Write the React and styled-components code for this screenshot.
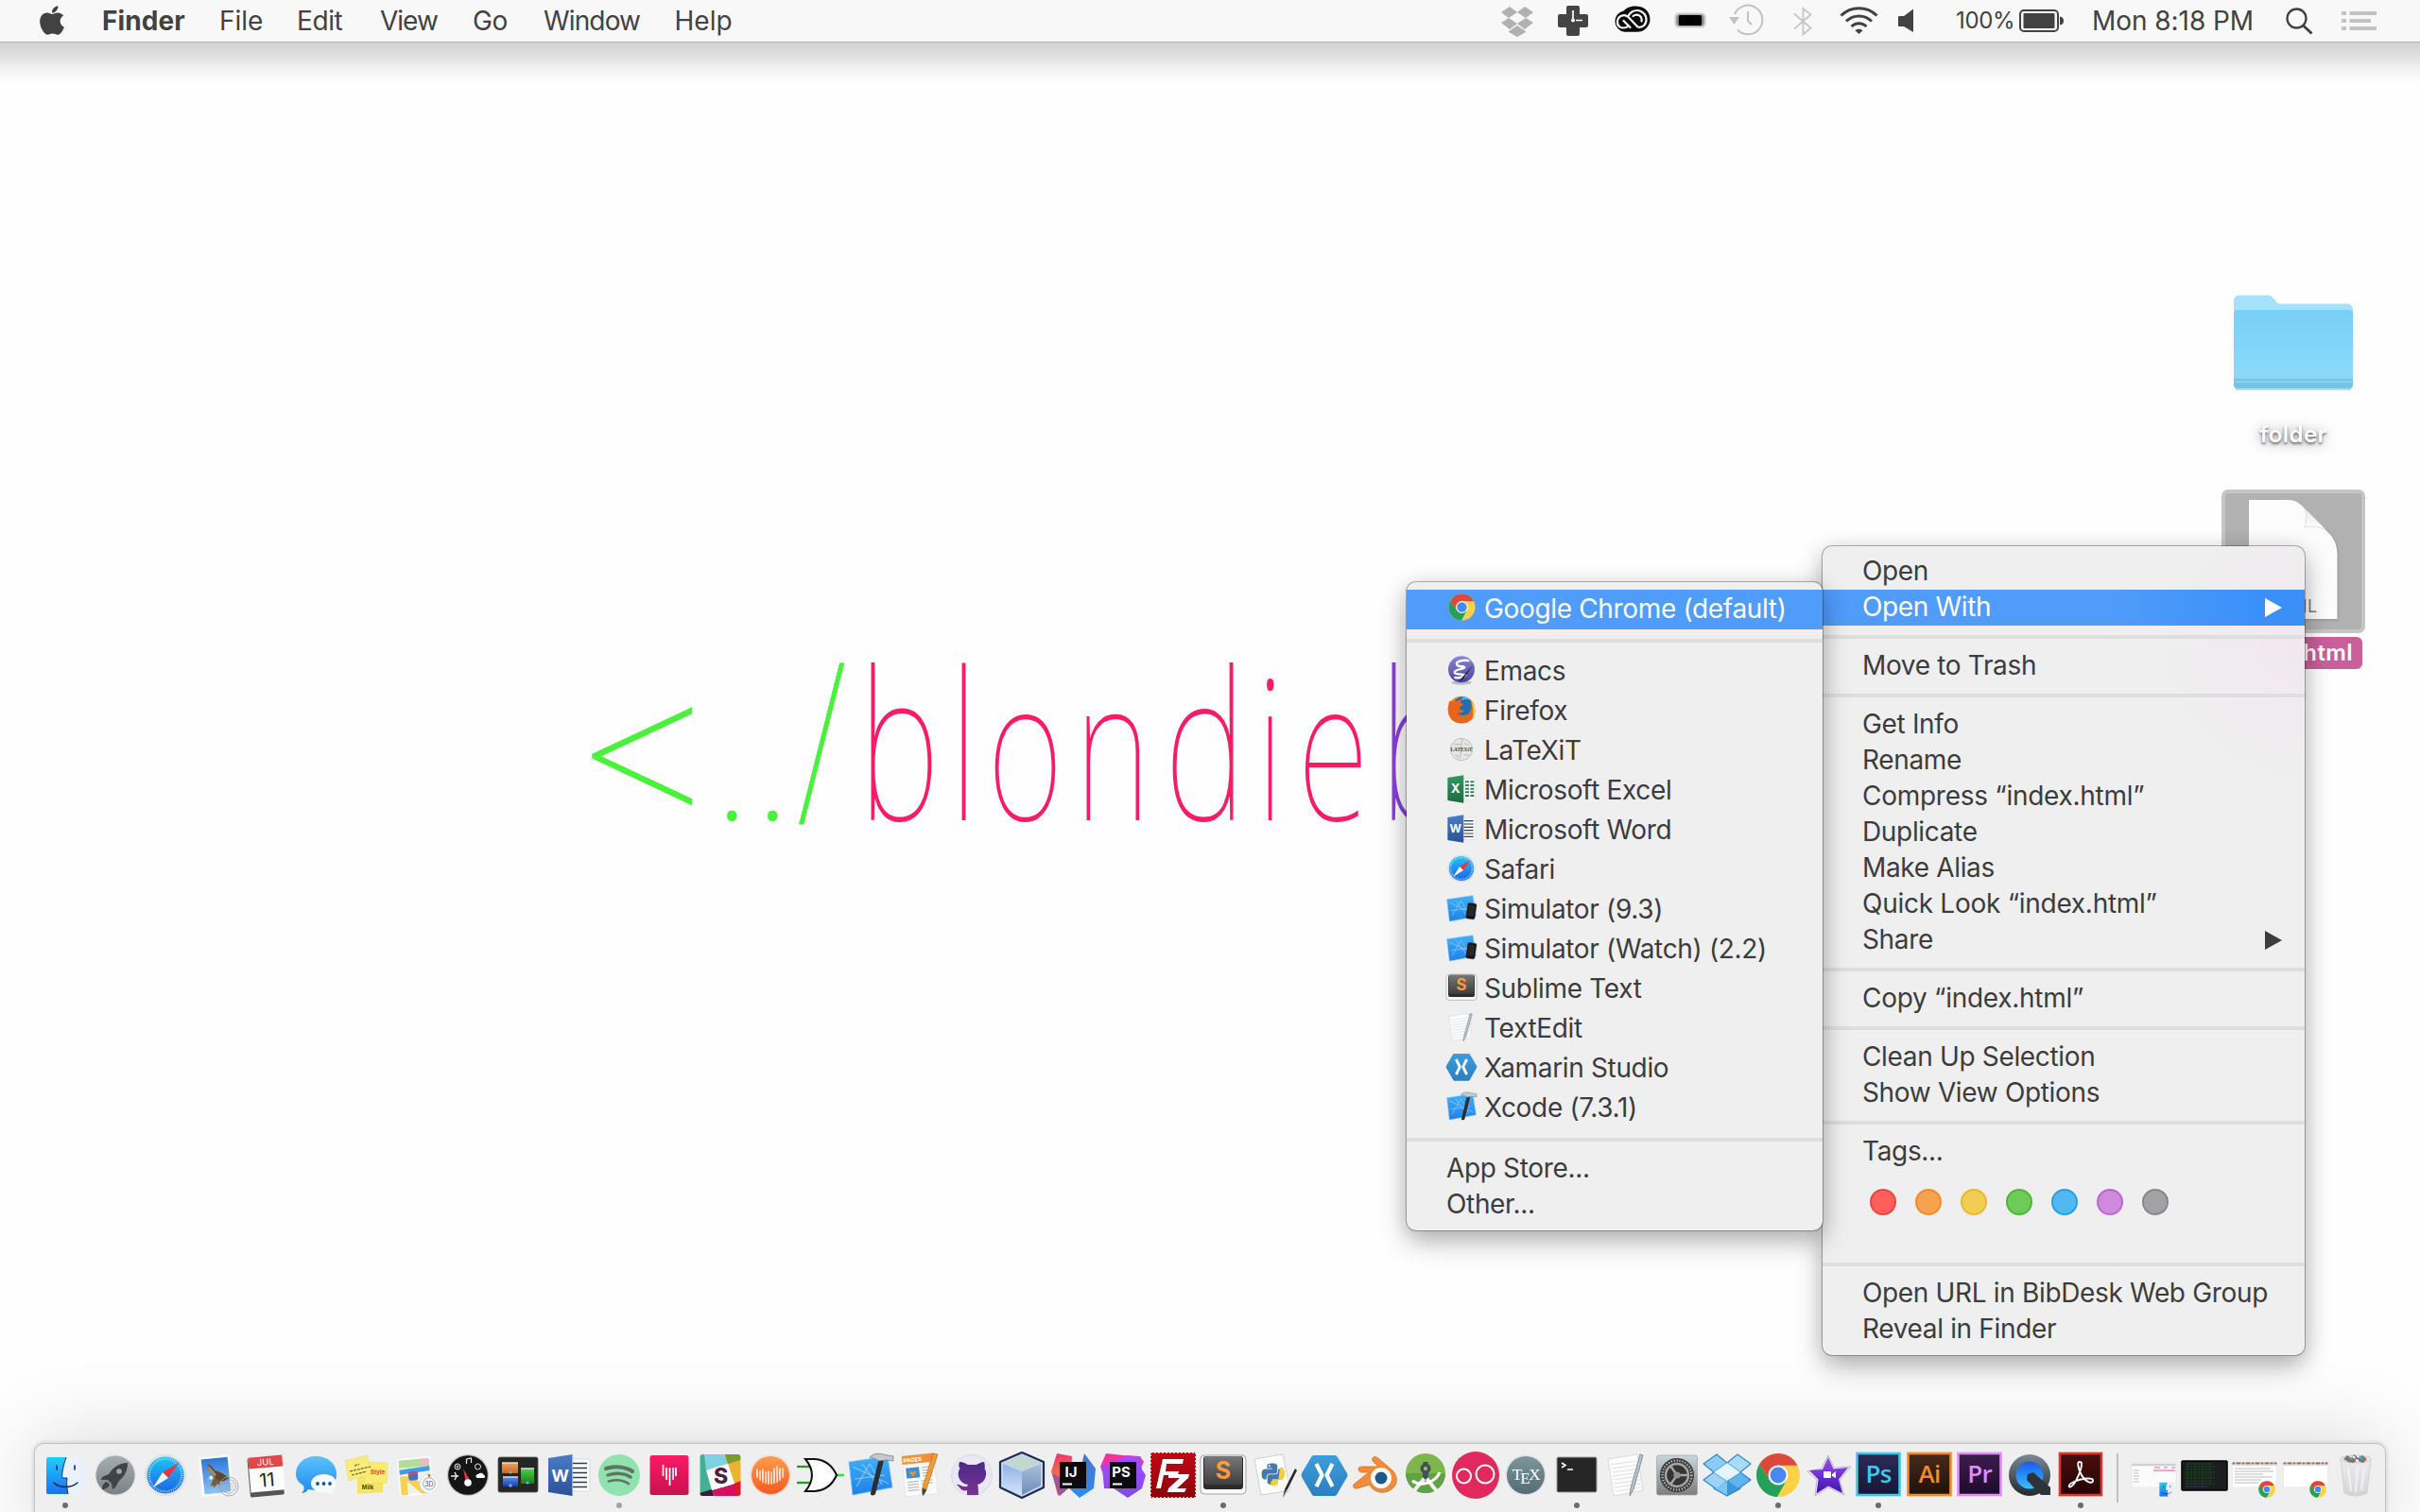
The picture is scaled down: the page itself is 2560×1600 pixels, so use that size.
import React from 'react';
import styled, { createGlobalStyle, css } from 'styled-components';
import { FaApple, FaPython } from 'react-icons/fa';

const GlobalStyle = createGlobalStyle`
  * { box-sizing: border-box; }
  body { margin: 0; background: #fefefe; font-family: Inter, Roboto, sans-serif; }
`;

const Screen = styled.div`
  position: relative;
  display: flex;
  flex-direction: column;
  width: 2560px;
  height: 1600px;
  overflow: hidden;
  background: #fefefe;
`;

/* ---------- menu bar ---------- */

const MenuBar = styled.header`
  display: flex;
  align-items: center;
  height: 45px;
  flex: none;
  background: #f8f8f8;
  border-bottom: 1px solid #b2b2b2;
  color: #424242;
`;

const BarItem = styled.span`
  width: ${p => p.$w}px;
  flex: none;
  font-size: 28px;
  line-height: 44px;
  letter-spacing: ${p => p.$ls}px;
  font-weight: ${p => (p.$bold ? 700 : 400)};
  white-space: nowrap;
`;

const AppleMark = styled.span`
  display: flex;
  margin: 0 39px 2px 41px;
  width: 28px;
  justify-content: center;
`;

const Status = styled.div`
  display: flex;
  align-items: center;
  margin-left: auto;
  height: 44px;
`;

const Glyph = styled.svg`
  display: block;
  flex: none;
  width: ${p => p.$w}px;
  height: 44px;
  margin-right: ${p => p.$gap}px;
  overflow: visible;
`;

const Percent = styled.span`
  width: 67px;
  font-size: 24px;
  letter-spacing: -0.35px;
  line-height: 44px;
`;

const Clock = styled.span`
  width: 205px;
  font-size: 28px;
  letter-spacing: -0.05px;
  line-height: 44px;
  white-space: nowrap;
`;

/* ---------- desktop ---------- */

const Desktop = styled.main`
  display: flex;
  flex: 1;
  min-height: 0;
  background: linear-gradient(#d2d2d2 0px, #e0e0e0 15px, #f4f4f4 30px, rgba(254, 254, 254, 0) 44px);
`;

const Wordmark = styled.svg`
  flex: none;
  width: 920px;
  height: 260px;
  margin: 615px 0 0 600px;
  overflow: visible;
`;

const Thin = styled.text`
  font-family: 'Noto Sans', 'Open Sans', sans-serif;
  font-weight: ${p => p.$w || 100};
  font-size: ${p => p.$size || 220}px;
  fill: ${p => p.$c};
  stroke: ${p => p.$c};
  stroke-width: ${p => p.$sw || 0};
`;

const Column = styled.div`
  display: flex;
  flex-direction: column;
  align-items: center;
  width: 152px;
  margin: 267px 0 0 auto;
  margin-right: 58px;
`;

const FolderArt = styled.svg`
  width: 128px;
  height: 102px;
  overflow: visible;
`;

const FolderLabel = styled.div`
  margin-top: 28px;
  height: 36px;
  line-height: 36px;
  font-size: 24px;
  font-weight: 600;
  letter-spacing: 0.44px;
  color: #fff;
  text-shadow: 0 2px 3px rgba(0, 0, 0, 0.55), 0 2px 14px rgba(0, 0, 0, 0.4);
`;

const FileTile = styled.div`
  margin-top: 40px;
  width: 152px;
  height: 152px;
  border: 4px solid #c5c5c5;
  border-radius: 7px;
  background: #b1b1b1;
  display: flex;
  justify-content: center;
  align-items: flex-start;
  padding-top: 7px;
`;

const FileArt = styled.svg`
  width: 94px;
  height: 126px;
  overflow: visible;
`;

const FileLabel = styled.div`
  margin-top: 4px;
  width: 145px;
  height: 34px;
  line-height: 33px;
  border-radius: 6px;
  background: #c8609b;
  color: #fff;
  text-align: center;
  font-size: 24px;
  font-weight: 600;
  letter-spacing: 0.4px;
`;

/* ---------- context menus ---------- */

const Menu = styled.div`
  position: absolute;
  left: ${p => p.$x}px;
  top: ${p => p.$y}px;
  width: ${p => p.$w}px;
  padding: 8px 0;
  border-radius: 10px;
  background: ${p =>
    p.$tint
      ? 'radial-gradient(circle at 500px 110px, #f2e6ef 0, rgba(240,234,239,.6) 70px, rgba(239,239,239,0) 140px), #efefef'
      : '#efefef'};
  box-shadow: 0 0 0 1px rgba(0, 0, 0, 0.28), 0 12px 28px rgba(0, 0, 0, 0.28), 0 2px 22px rgba(0, 0, 0, 0.1);
`;

const Item = styled.div`
  display: flex;
  align-items: center;
  height: ${p => (p.$tall ? 42 : 38)}px;
  padding-left: ${p => p.$pad}px;
  padding-right: 24px;
  font-size: 28px;
  letter-spacing: -0.34px;
  white-space: nowrap;
  color: #3c3c3c;
  ${p =>
    p.$active &&
    css`
      color: #fff;
      background: ${p.$shade ? 'linear-gradient(90deg, #4f9cfb 60%, #3b90f8 90%)' : '#4f9cfb'};
    `}
`;

const ItemText = styled.span`
  flex: 1;
  line-height: 34px;
  padding-bottom: ${p => p.$lift || 2}px;
  letter-spacing: ${p => (p.$quoted ? -0.27 : -0.34)}px;
`;

const Divider = styled.hr`
  border: 0;
  height: 4px;
  margin: 10px 0;
  background: #dedede;
`;

const Arrow = styled.svg`
  width: 18px;
  height: 20px;
`;

const ItemIcon = styled.span`
  display: flex;
  justify-content: center;
  align-items: center;
  width: 32px;
  height: 32px;
  margin: -5px 8px 0 0;
`;

const Tags = styled.div`
  display: flex;
  gap: 20px;
  padding: 20px 0 0 50px;
  height: 88px;
`;

const Tag = styled.span`
  width: 28px;
  height: 28px;
  border-radius: 50%;
  background: ${p => p.$c};
  border: 2px solid ${p => p.$b};
`;

/* ---------- dock ---------- */

const Dock = styled.footer`
  flex: none;
  display: flex;
  height: 90px;
  margin: 0 36px -17px 36px;
  padding: 6px 0 0 5px;
  background: #efefef;
  border: 1px solid #c4c4c4;
  border-radius: 10px;
  box-shadow: 0 0 5px rgba(0, 0, 0, 0.18), 0 0 90px rgba(0, 0, 0, 0.16);
`;

const Slot = styled.div`
  display: flex;
  flex-direction: column;
  align-items: center;
  flex: none;
  width: 53.3px;
`;

const Art = styled.svg`
  display: block;
  flex: none;
  width: ${p => p.$s || 54}px;
  height: ${p => p.$s || 54}px;
  overflow: visible;
`;

const Dot = styled.i`
  width: 6px;
  height: 6px;
  margin-top: 2px;
  border-radius: 50%;
  background: ${p => (p.$soft ? '#a4a4a4' : '#6c6c6c')};
`;

const DockRule = styled.div`
  flex: none;
  width: 2px;
  height: 52px;
  margin: 4px 11px 0 12px;
  background: #c0c0c0;
`;

/* ---------- shared gradients ---------- */

const DefsHost = styled.svg`
  display: block;
  width: 0;
  height: 0;
  flex: none;
`;

const ramps = [
  ['gFinder', '#1ed0fa', '#1b6ef3'], ['gRocket', '#a6adb1', '#7b8286'], ['gSafari', '#1fc3f8', '#1b62e6'],
  ['gMail', '#2c78d8', '#8ec3f4'], ['gMsg', '#5cc2fb', '#1d8af3'], ['gPink', '#fb1a66', '#c8124f'],
  ['gCloud', '#ff9c4a', '#ff5a1f'], ['gXcode', '#3fb0fa', '#1f80e6'], ['gWord', '#4a7cc8', '#2a5299'],
  ['gExcel', '#2f9a62', '#1c6b40'], ['gOct', '#4a2a85', '#7a3390'], ['gCubeL', '#8fb1e8', '#d6e4fa'],
  ['gCubeR', '#a9bfdc', '#6f8db8'], ['gFz', '#c20a14', '#8c040a'], ['gSub', '#777', '#3f3f3f'],
  ['gXam', '#3d9ddc', '#2b80c0'], ['gTex', '#7d959b', '#546c73'], ['gSys', '#c9d6dd', '#7d7d7d'],
  ['gStar', '#a54bf0', '#3a14b0'], ['gQt', '#7b8a96', '#23282e'], ['gQtIn', '#1a5af0', '#37c0ff'],
  ['gPs', '#2b2b58', '#171733'], ['gAi', '#4a2a18', '#20110a'], ['gPr', '#3c1d50', '#1d0c29'],
  ['gPdf', '#4a0f0c', '#240505'], ['gTrash', '#ececee', '#d2d2d5'], ['gIJ', '#ef3a6b', '#f59b3a'],
  ['gIJ2', '#4a74c8', '#2b8df5'], ['gPS1', '#ff2f93', '#8f4bf2'], ['gPS2', '#a94bff', '#7f4be8'],
  ['gFolder', '#77d0f7', '#90dbf9'], ['gEmacs', '#8b86d4', '#4a44a0'], ['gOrange', '#f6a052', '#c96a1e'],
  ['gGreen', '#4fcf4a', '#17801c'], ['gBlue', '#5b8ff2', '#1b3f9c'], ['gCurl', '#e9e9e9', '#ffffff'],
];

const Defs = () => (
  <DefsHost aria-hidden="true">
    <defs>
      {ramps.map(([id, a, b]) => (
        <linearGradient id={id} key={id} x1="0" y1="0" x2="0" y2="1">
          <stop offset="0" stopColor={a} />
          <stop offset="1" stopColor={b} />
        </linearGradient>
      ))}
      <filter id="soft" x="-30%" y="-60%" width="160%" height="220%"><feGaussianBlur stdDeviation="1.6" /></filter>
    </defs>
  </DefsHost>
);

/* ---------- app icons, drawn around a centred origin ---------- */

const T = styled.text`
  font-family: ${p => p.$f || 'Inter, sans-serif'};
  font-size: ${p => p.$s}px;
  font-weight: ${p => p.$w || 400};
  text-anchor: middle;
  fill: ${p => p.$c || '#fff'};
  letter-spacing: ${p => p.$ls || 0}px;
`;

const Finder = () => (
  <g>
    <rect x="-20" y="-19" width="41" height="39" rx="2" fill="#e9f1fb" />
    <path d="M-18-19H1C-2-10-4-1-3 3H2C1 9 2 15 3 20H-18a2 2 0 0 1-2-2V-17a2 2 0 0 1 2-2Z" fill="url(#gFinder)" />
    <path d="M1-19C-2-10-4-1-3 3H2C1 9 2 15 3 20" fill="none" stroke="#14355f" strokeWidth="1" />
    <path d="M-9-10v4M10-10v4" stroke="#12264a" strokeWidth="1.6" strokeLinecap="round" />
    <path d="M-12 8C-6 14 6 14 13 8" fill="none" stroke="#12264a" strokeWidth="1.5" strokeLinecap="round" />
  </g>
);

const Launchpad = () => (
  <g>
    <circle r="22" fill="#e3e5e6" /><circle r="20.5" fill="url(#gRocket)" />
    <path d="M13-13C3-13-3-7-7-1L-14 2-15 5-8 5-4 9-3 15 0 13 4 6C10 1 13-5 13-13Z" fill="#3f4447" />
    <circle cx="4" cy="-4" r="2.8" fill="#a1a8ac" /><path d="M-9 7C-13 8-14 12-14 15-11 15-7 13-6 10Z" fill="#3f4447" />
  </g>
);

const Safari = () => (
  <g>
    <circle r="21.6" fill="#e4e8ec" stroke="#cfd3d6" strokeWidth=".6" /><circle r="19.6" fill="url(#gSafari)" />
    <circle r="17.3" fill="none" stroke="#bfe4ff" strokeWidth="2.6" strokeDasharray=".8 1.46" />
    <path d="M14-13 3 3-3-3Z" fill="#f2323a" /><path d="M-13 13-3-3 3 3Z" fill="#f5f7f9" />
  </g>
);

const Mail = () => (
  <g>
    <g transform="rotate(-6)">
      <rect x="-17" y="-20" width="33" height="41" fill="#fff" stroke="#f6f6f6" strokeWidth="2" strokeDasharray="1.5 1.5" />
      <rect x="-14.5" y="-18" width="28" height="37" fill="url(#gMail)" />
      <path d="M-9-13C-5-12-3-7-1-5 3-4 8-1 13 5L9 7C4 8 0 6-3 2-5-2-9-6-9-13Z" fill="#5f4630" />
      <path d="M-9-13-7-4-2 2 0-1Z" fill="#a58a66" /><path d="M-3 3-8 11-5 10-4 13 0 9 3 11 3 6Z" fill="#7f5a33" /><circle cx="-6" cy="2" r="2" fill="#fff" /><path d="M-8 3l-2 1 2 .5Z" fill="#f2c230" />
    </g>
    <g fill="none" stroke="#9aa0a6" strokeWidth=".8"><circle cx="13" cy="12" r="10" /><circle cx="13" cy="12" r="7.4" /><path d="M8 9h10M8 12h10M8 15h10" /></g>
  </g>
);

const Calendar = () => (
  <g transform="rotate(-5)">
    <rect x="-19" y="-19" width="36" height="41" rx="1.5" fill="#555" /><rect x="-18" y="-20" width="36" height="37" fill="#fdfdfd" />
    <rect x="-18" y="-20" width="36" height="12" fill="#e0474a" />
    <T y="-10.5" $s={9.5} $ls={0.2}>JUL</T><T y="12" $s={20} $c="#222">11</T>
  </g>
);

const Messages = () => (
  <g>
    <path d="M-1-20C12-20 21-12 21-1S12 16-1 16C-4 16-7 15-9 15-10 17-13 19-16 19-13 16-13 14-14 11-19 8-22 4-22-1-22-12-13-20-1-20Z" fill="url(#gMsg)" />
    <path d="M8-1C15-1 21 3 21 9 21 12 19 14 17 16 17 18 18 19 19 20 16 20 14 19 13 18 0 20-6 14-6 9-6 3 0-1 8-1Z" fill="#f7fafd" />
    <g fill="#17559e"><circle cx="1" cy="9" r="1.9" /><circle cx="7.5" cy="9" r="1.9" /><circle cx="14" cy="9" r="1.9" /></g>
  </g>
);

const Stickies = () => (
  <g>
    <path d="M-10-1H17V18L-10 20Z" fill="#f4e566" /><path d="M-4-14 22-13 21 8-2 9Z" fill="#faec70" stroke="#e5d55a" strokeWidth=".5" />
    <path d="M-23-15 0-21 6-2-19 6Z" fill="#f9ec7a" stroke="#e5d55a" strokeWidth=".5" />
    <path d="M-13-10l5-1.5M-18-4 4-9M-16 0 0-4" stroke="#6b6322" strokeWidth="1.2" strokeDasharray="3 1" />
    <T x="11.500" y="-1" $s={6} $w={700} $c="#e0452e">Style</T><T x="1" y="15" $s={6} $w={700} $c="#51491a">Milk</T>
  </g>
);

const Maps = () => (
  <g>
    <g transform="rotate(-5)">
      <rect x="-20" y="-18" width="34" height="38" fill="#f3f1e9" stroke="#fff" strokeWidth="1.5" />
      <path d="M-19-17H13V-9H-19Z" fill="#b3dc96" /><path d="M4-17h9v7H4Z" fill="#f3b6c4" /><path d="M-19-7 13-9v5L-19-2Z" fill="#3e9de8" />
      <path d="M-19 0-8 0 9 14V20H3L-12 5-12 20H-19Z" fill="#f6d054" /><rect x="-10" y="-4" width="10" height="9" rx="2.5" fill="#3f72c8" />
      <path d="M-10-2h10" stroke="#e8483f" strokeWidth="2" /><path d="M0 8 12-3v12Z" fill="#c7e7ab" />
    </g>
    <circle cx="12" cy="9" r="10" fill="#f7f7f7" stroke="#d6d6d6" strokeWidth=".6" /><circle cx="12" cy="9" r="6.3" fill="#fff" stroke="#7fa7cc" strokeWidth="1" />
    <T x="12" y="11.5" $s={7} $c="#4b4b4b">3D</T><circle cx="12" cy="0.5" r="1.2" fill="#e33" />
  </g>
);

const Dashboard = () => (
  <g>
    <circle r="22" fill="#bdbdbd" /><circle r="20.8" fill="#151515" />
    <path d="M-5-7 3 7-2 9Z" fill="#f0323a" /><circle cy="8" r="3.8" fill="#fff" />
    <g stroke="#e8e8e8" fill="none"><path d="M-1.500-12v-5l5-1v5" strokeWidth="1.2" /><circle cx="-11" cy="-9" r="3" /><circle cx="-11" cy="-9" r="1" /><circle cx="10.5" cy="-9" r="3" /></g>
    <path d="M-18 1h8M-14-3l2 4-2 4" stroke="#f0f0f0" strokeWidth="1.4" fill="none" /><path d="M10 3a2 2 0 0 1 1-4 3.5 3.5 0 0 1 6 1 1.6 1.6 0 0 1 0 3Z" fill="#fff" />
  </g>
);

const Mission = () => (
  <g>
    <rect x="-21" y="-19" width="42" height="37" rx="2" fill="#262626" stroke="#555" strokeWidth=".8" />
    <rect x="-17" y="-13" width="17" height="11" fill="url(#gOrange)" /><rect x="3" y="-7" width="14" height="16" fill="url(#gGreen)" /><rect x="-16" y="2" width="16" height="10" fill="url(#gBlue)" />
    <path d="M-17-13H0M3-7H17M-16 2H0" stroke="#ddd" strokeWidth="1.4" /><g fill="#55b9f5"><circle cx="-8" cy="-3" r="1.6" /><circle cx="-8" cy="11" r="1.8" /><circle cx="10" cy="8" r="1.6" /></g>
  </g>
);

const Office = ({ letter, fill, line }) => (
  <g>
    <rect x="2" y="-17" width="20" height="34" rx="1" fill="#fdfdfd" stroke="#cfcfcf" strokeWidth=".7" />
    {letter === 'X'
      ? <path d="M6-11.5h6M6-6h6M6-.5h6M6 5h6M6 10.500h6M14-11.500h6M14-6h6M14-.5h6M14 5h6M14 10.500h6" stroke={line} strokeWidth="3" />
      : <path d="M4-12.500h15M4-7.500h15M4-2.500h15M4 2.500h15M4 7.500h15M4 12.500h15" stroke={line} strokeWidth="1.7" />}
    <path d="M-22-18 3.500-22V22L-22 18Z" fill={fill} />
    <T x="-9.500" y="6.500" $s={letter === 'W' ? 18 : 20} $w={700}>{letter}</T>
  </g>
);
const Word = () => <Office letter="W" fill="url(#gWord)" line="#333c4c" />;
const Excel = () => <Office letter="X" fill="url(#gExcel)" line="#37835a" />;

const Spotify = () => (
  <g>
    <circle r="22" fill="#90e2ae" />
    <g fill="none" stroke="#5e7465" strokeLinecap="round"><path d="M-14-7C-5-10 7-9 14-4" strokeWidth="4" /><path d="M-12 0C-4-3 6-2 12 2" strokeWidth="3.400" /><path d="M-11 6.500C-4 4.500 4 5 10 9" strokeWidth="2.700" /></g>
  </g>
);

const PinkBars = () => (
  <g><rect x="-20.500" y="-21" width="41" height="42" rx="2.500" fill="url(#gPink)" /><path d="M-6.500-11V1M-3-8V5M.5-8V11M4-8V5M7-8V1" stroke="#fff" strokeWidth="1.700" /></g>
);

const Slack = () => (
  <g>
    <clipPath id="slackClip"><rect x="-21.500" y="-22" width="43" height="44" rx="3" /></clipPath>
    <g clipPath="url(#slackClip)">
      <rect x="-22" y="-22" width="44" height="44" fill="#fff" />
      <path d="M-22-22H-13L-5 22-22 22Z" fill="#43b094" /><path d="M-17-22H6L8-12-15-5Z" fill="#7fd0e0" /><path d="M5-22H22V-16L8-11Z" fill="#7d9b2c" />
      <path d="M8-12 22-16V7L15 9Z" fill="#ecb32e" /><path d="M22 6V22H17L14 9Z" fill="#e4152b" /><path d="M-9 16 15 9 18 22H-6Z" fill="#d3115f" /><path d="M-22 19-9 15-7 22H-22Z" fill="#3b1a3d" />
      <path d="M-15-5 8-12 15 9-9 16Z" fill="#fff" />
    </g>
    <T x=".5" y="9" $s={23} $w={800} $c="#4a2344">S</T>
  </g>
);

const Shazam = () => (
  <g><circle r="21.800" fill="#f0e2da" /><circle r="20" fill="url(#gCloud)" /><path d="M-14-6V2M-11-4V5M-8-6V7M-5-3V8M-2-4V9M1-3V9M4-7V8M7-9V7M10-7V5M13-7V2" stroke="#ffe9dc" strokeWidth="1.700" strokeLinecap="round" /></g>
);

const Gate = () => (
  <g fill="none"><path d="M-25-9h14M-25 8h14M17 0h8" stroke="#45d53f" strokeWidth="2.500" /><path d="M-25-9h14M-25 8h14" stroke="#222" strokeWidth=".8" /><path d="M-16-17H-6C6-16 13-9 17 0 13 9 6 16-6 17H-16C-7 6-7-6-16-17Z" fill="#fff" stroke="#111" strokeWidth="2" /></g>
);

const Blueprint = () => (
  <g>
    <path d="M-23-14 18-20 23 13-19 21Z" fill="url(#gXcode)" stroke="#6fc0fb" strokeWidth=".8" />
    <path d="M-15 12-1-12 12 10M-17 4 15 0M-9-12l18 24M-19-9l38 18" stroke="#a9dcff" strokeWidth="1" fill="none" opacity=".8" />
  </g>
);
const Xcode = () => (
  <g><Blueprint /><path d="M9-18 14-16 5 20C4 22-1 22 0 19Z" fill="#2b2e33" /><path d="M-1-19C4-24 10-23 18-21L24-20V-15L17-16 9-15 3-18Z" fill="#c3c9ce" stroke="#70767b" strokeWidth=".7" /></g>
);
const Simulator = () => (
  <g><Blueprint /><g transform="rotate(9 14 8)"><rect x="8" y="-8" width="14" height="25" rx="2.500" fill="#0e0e10" stroke="#4d4d50" strokeWidth=".8" /><rect x="10" y="-5" width="10" height="18" fill="#26272b" /></g></g>
);

const Pages = () => (
  <g>
    <g transform="rotate(-6)"><rect x="-19" y="-22" width="34" height="43" fill="#fcfcfc" stroke="#ddd" strokeWidth=".6" /><rect x="-19" y="-22" width="34" height="9" fill="#f2903a" /><T x="-8" y="-15" $s={6} $w={700}>PAGES</T>
      <rect x="-16" y="-9" width="14" height="11" fill="#3c8fd6" /><path d="M-13-4a2.500 2.500 0 0 1 4 0 2.500 2.500 0 0 1 4 0l-4 5Z" fill="#f08a2a" />
      <path d="M1-8h11M1-5h11M1-2h11M1 1h11M-16 6h12M-16 9h12M-16 12h12M-16 15h12M-1 6h12M-1 9h12" stroke="#bbb" strokeWidth="1.200" /></g>
    <path d="M12-23 17-22 4 18 1 21 0 16Z" fill="#ee9c38" stroke="#b86d18" strokeWidth=".7" /><path d="M1 14 5 15 3 20 1 22Z" fill="#444" />
  </g>
);

const Octocat = () => (
  <g>
    <circle r="21.500" fill="#e9e6f5" stroke="#d5d2e2" strokeWidth=".8" />
    <path d="M-13-14C-9-14-6-12-4-11H5C7-12 10-14 13-14 14-11 14-9 13.500-7 17-2 15 8 6 10 7 12 7 17 7 21H-5V16C-11 18-13 12-16 10-13 9-11 13-5 12L-4 10C-15 8-16-2-12.500-7-14-9-14-11-13-14Z" fill="url(#gOct)" />
  </g>
);

const Cube = () => (
  <g strokeLinejoin="round"><path d="M0-24 23-14V13L0 24-23 13V-14Z" fill="#c7d7f2" stroke="#1f2c4f" strokeWidth="2.200" /><path d="M-20-12 0-4V21L-20 11Z" fill="url(#gCubeL)" /><path d="M20-12 0-4V21L20 11Z" fill="url(#gCubeR)" /><path d="M0-21 19-13 0-5-19-13Z" fill="#bfd9cf" /></g>
);

const JetBlock = ({ label }) => (
  <g><rect x="-14" y="-14" width="28" height="28" fill="#0b0b0b" /><T x="-2" y="2" $s={15} $w={700}>{label}</T><path d="M-11 9.500H-1" stroke="#fff" strokeWidth="2" /></g>
);
const IntelliJ = () => (
  <g><path d="M-17-23-1-20-2 0-16 22-20 6-23-4Z" fill="url(#gIJ)" /><path d="M-22-2-16 20-14 22 0 10Z" fill="#a0529a" /><path d="M12-23 24-7 22 14 7 24-4 14 8-6Z" fill="url(#gIJ2)" /><JetBlock label="IJ" /></g>
);
const PhpStorm = () => (
  <g><path d="M-18-23 0-21 18-20 22-14 15 0-16 14-20 2-24-9Z" fill="url(#gPS1)" /><path d="M4-21 18-19 20-6 24 0 20 14 5 24-10 14-20 14-22-8Z" fill="url(#gPS2)" /><JetBlock label="PS" /></g>
);

const FileZilla = () => (
  <g><rect x="-24" y="-24" width="48" height="48" fill="url(#gFz)" stroke="#f5eaea" strokeWidth="1.600" strokeDasharray="2 2" />
    <path d="M-11-17H11L10-12H-7L-8-4H6L5 0H-10L-13 14H-18Z" fill="#fff" /><path d="M-5-1H17L16 3 4 14H14L12 18H-6L-5 14 7 3H-5Z" fill="#fff" /></g>
);

const Sublime = () => (
  <g><rect x="-24" y="-21" width="48" height="41" rx="4" fill="#f8f8f8" stroke="#a5a5a5" strokeWidth="1" /><rect x="-21" y="-20" width="42" height="35" rx="3" fill="#2c2c2c" /><rect x="-20" y="-20" width="40" height="30" rx="2" fill="url(#gSub)" /><T y="4" $s={25} $w={700} $c="#ff9a3c">S</T></g>
);

const Idle = () => (
  <g><path d="M-21-17 9-22 17 16-14 21Z" fill="#fdfdfd" stroke="#c6c6c6" strokeWidth=".8" /><FaPython x={-15} y={-14} size={26} color="#4478b0" /><path d="M6-8H8C12-8 12 4 8 5H0C-3 5-4 7-4 10-3 12 3 12 4 9V7" fill="#f4cd3c" /><path d="M22-7 24-5 13 17 9 24 11 15Z" fill="#26292d" /><path d="M13 15 15 16 9 24Z" fill="#b5b5b5" /></g>
);

const Xamarin = () => (
  <g><path d="M-11-21H11Q13-21 14-19L24-2Q25 0 24 2L14 19Q13 22 11 22H-11Q-13 22-14 19L-24 2Q-25 0-24-2L-14-19Q-13-21-11-21Z" fill="url(#gXam)" /><path d="M-8.500-12-2.500 0-8.500 12M8.500-12 2.500 0 8.500 12" stroke="#fff" strokeWidth="4.200" fill="none" strokeLinejoin="round" /></g>
);

const Blender = () => (
  <g><path d="M-1-19C0-20 3-19 5-17L19-5C25 1 25 10 18 15 10 21-2 18-5 10L-18 14C-22 15-24 11-21 9L-6-3H-14C-18-4-18-9-14-9H4L-1-14C-3-16-3-18-1-19Z" fill="#f08c3a" stroke="#d66d1c" strokeWidth=".8" /><circle cx="7" cy="3" r="11" fill="#fff" /><circle cx="7" cy="3" r="6.500" fill="#1c5a8c" /></g>
);

const AndroidStudio = () => (
  <g><circle cy="-2" r="21" fill="#7db64a" /><path d="M-21-2A21 21 0 0 0 21-2Z" fill="#5fa344" /><path d="M0 2-16 21M0 2 15 21" stroke="#eef1ee" strokeWidth="4" /><path d="M-14 6C-6 12 10 9 15-3" fill="none" stroke="#fff" strokeWidth="3.200" /><path d="M-2.500-14h5v4h-5ZM-3-6h6V2L0 5-3 2Z" fill="#46505a" /><circle cy="-7" r="5.500" fill="#46505a" /><circle cy="-7" r="1.900" fill="#9fd067" /></g>
);

const Rings = () => (
  <g><circle r="25" fill="#e2295e" /><g fill="none" stroke="#fff" strokeWidth="2"><circle cx="-12.500" cy="1" r="7.500" /><circle cx="10" cy="-1" r="9.500" /></g></g>
);

const TeX = () => (
  <g><circle r="21.500" fill="#dfe3e4" /><circle r="20" fill="url(#gTex)" /><g><T x="-9" y="5" $s={17} $f="'Liberation Serif', serif">T</T><T x="-.5" y="9" $s={17} $f="'Liberation Serif', serif">E</T><T x="9.500" y="5" $s={17} $f="'Liberation Serif', serif">X</T></g></g>
);

const Terminal = () => (
  <g><rect x="-21" y="-19" width="42" height="37" rx="1.500" fill="#262626" stroke="#9a9a9a" strokeWidth="1" /><path d="M-16-13l4 2.500-4 2.500M-10-6h6" stroke="#fff" strokeWidth="1.600" fill="none" /></g>
);

const TextEdit = () => (
  <g><path d="M-20-17 11-22 17 16-14 22Z" fill="#fcfcfc" stroke="#d3d3d3" strokeWidth=".8" /><path d="M-17-11 10-15M-16-7 11-11M-15-3 12-7M-15 1 13-3M-14 5 13 1M-14 9 14 5M-13 13 14 9M-12 17 15 13" stroke="#d9dce2" strokeWidth=".9" /><path d="M14-22 17-21 7 15 3 22 4 14Z" fill="#b9c4cd" stroke="#74808a" strokeWidth=".8" /></g>
);

const SysPrefs = () => (
  <g><rect x="-21.500" y="-21" width="43" height="42" rx="2" fill="url(#gSys)" stroke="#9fa6aa" strokeWidth=".7" /><circle r="18" fill="#353535" /><circle r="15.500" fill="none" stroke="#b5b5b5" strokeWidth="2.500" strokeDasharray="1.400 1.600" /><circle r="12" fill="none" stroke="#a5a5a5" strokeWidth="2.500" /><path d="M0 0-7 10M0 0-7-10M0 0H12" stroke="#a5a5a5" strokeWidth="2.400" /><circle r="3.600" fill="#909090" /></g>
);

const DropboxApp = () => (
  <g stroke="#2f86cb" strokeWidth="1.100" strokeLinejoin="round">
    <path d="M-11-22 0-13-14-3-25-12Z" fill="#8accf5" /><path d="M11-22 25-12 14-3 0-13Z" fill="#a9dbf8" /><path d="M-25 5-14-3 0 6-11 15Z" fill="#9ad5f8" /><path d="M14-3 25 5 11 15 0 6Z" fill="#61b3ec" />
    <path d="M0-13 14-3 0 6-14-3Z" fill="#e4f5ff" stroke="none" /><path d="M0 6-14 15 0 22Z" fill="#7cc6f3" stroke="none" /><path d="M0 6 14 15 0 22Z" fill="#3d97dc" stroke="none" /><path d="M-14 13V14L0 22 14 14V13" fill="none" />
  </g>
);

const Chrome = () => (
  <g><circle r="23" fill="#fdd047" /><path d="M-19.900-11.500A23 23 0 0 1 20.600-10.300H0L-9 5.200Z" fill="#dc483c" /><path d="M-19.900-11.500-9 5.200 0 10 9 5.200-1 23A23 23 0 0 1-19.900-11.500Z" fill="#24a05b" /><circle r="10.500" fill="#f6f6f6" /><circle r="8.400" fill="#4b87f2" /></g>
);

const IMovie = () => (
  <g><path d="M0-21 6-8 24-9 12 5 17 21 0 13-14 22-12 5-22-4-7-7Z" fill="#f2eff7" stroke="#a9a5b8" strokeWidth=".8" /><path d="M0-19 5.500-6.500 21-8 11 4.500 15 19 0 11.500-12.500 19.500-10.500 4.500-20-5-6-6Z" fill="url(#gStar)" /><rect x="-5" y="-4" width="8" height="7" rx="1" fill="#fff" /><path d="M4-1 8-4V3L4 1Z" fill="#fff" /></g>
);

const Adobe = ({ label, edge, fill }) => (
  <g><rect x="-22.500" y="-23" width="45" height="44" fill={fill} stroke={edge} strokeWidth="2.600" /><T y="7.500" $s={26} $f="'Open Sans', 'Noto Sans', sans-serif" $w={600} $c={edge} $ls={-0.8}>{label}</T></g>
);
const Ps = () => <Adobe label="Ps" edge="#3cc8ee" fill="url(#gPs)" />;
const Ai = () => <Adobe label="Ai" edge="#f28a2c" fill="url(#gAi)" />;
const Pr = () => <Adobe label="Pr" edge="#e08cf8" fill="url(#gPr)" />;
const Acrobat = () => (
  <g><rect x="-22" y="-23" width="44" height="44" fill="url(#gPdf)" stroke="#e0352a" strokeWidth="2.600" /><path d="M-1-14C-4-15-3-7 1 0 5 7 12 10 13 6 14 2 2 3-7 7-14 10-13 14-10 12-5 9 1-6 1-12 1-14 0-14-1-14Z" fill="none" stroke="#fff" strokeWidth="1.900" /></g>
);

const QuickTime = () => (
  <g><circle r="22" fill="url(#gQt)" /><circle r="14.500" fill="url(#gQtIn)" /><path d="M-2-1 4-3 22 13V21H12L-3 5Z" fill="#2e3338" /></g>
);

const Badge = ({ children }) => <g transform="translate(13 15) scale(.38)">{children}</g>;
const FinderWindow = () => (
  <g><rect x="-24" y="-13" width="47" height="26" fill="#fbfbfb" stroke="#ddd" strokeWidth=".5" /><path d="M-24-11H23" stroke="#cfcfcf" strokeWidth="2.500" /><path d="M-22-5h6M-22-2h5M-22 1h6M-22 4h5M-22 7h6" stroke="#b5b5b5" strokeWidth=".8" /><path d="M-1-5H22" stroke="#e87aa5" strokeWidth="1.300" /><path d="M0-8h6M10-8h4M18-8h4" stroke="#c5a0d5" strokeWidth="1.500" /><Badge><Finder /></Badge></g>
);
const DarkWindow = () => (
  <g><rect x="-24" y="-15" width="48" height="31" rx="1" fill="#1b1e1e" stroke="#000" strokeWidth="1.500" /><path d="M-20-12H9M-20-9H12M-20-6H8M-20-3H13M-20 0H10M-20 3H12M-20 6H8M-20 9H11" stroke="#1d4221" strokeWidth="1.300" strokeDasharray="4 1 2 1" /><path d="M-20 12H4" stroke="#2b3564" strokeWidth="1" /></g>
);
const PageWindow = ({ lines }) => (
  <g><rect x="-23.500" y="-13" width="47" height="26" fill="#fff" stroke="#dedede" strokeWidth=".5" /><path d="M-23.500-12.500h47" stroke="#8a6a5e" strokeWidth="2.200" strokeDasharray="3 1 5 1" /><path d="M-23.500-10.500h47" stroke="#ddd" strokeWidth="1.200" />
    {lines && <path d="M-21-7h38M-21-4h41M-21-1h30M-21 2h40M-21 5h28M-21 8h25" stroke="#d2d2d2" strokeWidth="1.300" />}<Badge><Chrome /></Badge></g>
);
const Trash = () => (
  <g><path d="M-16-17H16L12 19Q0 25-12 19Z" fill="url(#gTrash)" opacity=".9" stroke="#c9c9cb" strokeWidth=".8" /><ellipse cy="-17" rx="16.500" ry="4" fill="#ececee" stroke="#bbb" strokeWidth=".7" /><path d="M-13-17l4-4 4 3 3-4 5 4 4-3 5 4-4 4-6-2-5 2-5-1Z" fill="#7b7472" /><path d="M-7-19l3 2M4-20l3 3" stroke="#3bb5d8" strokeWidth="2" /><path d="M-2-17h3M8-16h3" stroke="#c26a5a" strokeWidth="2" /><path d="M-3-20l2 2M0-16l3 1" stroke="#fff" strokeWidth="2" /><path d="M-8-8-5 17M2-9 0 18M9-8 6 16" stroke="#f6f6f8" strokeWidth="2.500" opacity=".7" /></g>
);

const Emacs = () => (
  <g><ellipse cy="20" rx="16" ry="3.500" fill="#8c8c90" opacity=".5" /><circle cy="-1" r="21" fill="url(#gEmacs)" /><path d="M11-15C-2-17-12-11-6-7-2-5 5-6 5-4 3-1-12-1-11 4-9 8 4 6 6 8 3 11-4 13-10 12" fill="none" stroke="#fff" strokeWidth="3.600" strokeLinecap="round" /><path d="M21-11 3 14-4 20 0 13Z" fill="#1c1a33" /></g>
);
const Firefox = () => (
  <g><circle r="21.500" fill="#f28a1e" /><circle cx="2" cy="-5" r="15.500" fill="#1f6fb8" /><path d="M2-20.500a15.500 15.500 0 0 1 12 6C10-17 4-17 0-14Z" fill="#4fb4ea" /><path d="M-19-14C-16-13-13-14-8-13-5-16-3-17 0-17-3-14-2-10 3-9 3-6-2-6-3-3-3 0 0 1 4 1 2 6-5 6-7 4-4 10 8 11 13 4 17-1 16-8 15-13 22-5 24 6 18 14 10 23-6 25-15 16-23 8-22-5-19-14Z" fill="#e8651a" /><path d="M15-13C23-5 24 6 17 14 20 4 19-4 15-13Z" fill="#ffd23e" /></g>
);
const LaTeXiT = () => (
  <g><circle r="17.500" fill="#e6e6e6" stroke="#aaa" strokeWidth="1" /><path d="M3-16C-4-14 3 12-5 15M-12-8h10M4 9h9M-10 9l6 3M5-9l7 2" stroke="#b3b3b3" strokeWidth="1.300" fill="none" /><T y="3" $s={8} $w={700} $c="#444" $f="'Liberation Serif', serif">LATEXiT</T></g>
);

const AppIcon = ({ art: A, size, ...rest }) => (
  <Art viewBox="-27 -27 54 54" $s={size}><A {...rest} /></Art>
);

/* ---------- content ---------- */

const barItems = [
  ['Finder', 124, 0.1, true], ['File', 82, 0], ['Edit', 88, -0.4], ['View', 98, -1], ['Go', 75, -0.4], ['Window', 138.5, -0.85], ['Help', 60, 0],
];

const openWith = [
  ['Emacs', Emacs], ['Firefox', Firefox], ['LaTeXiT', LaTeXiT], ['Microsoft Excel', Excel], ['Microsoft Word', Word], ['Safari', Safari],
  ['Simulator (9.3)', Simulator], ['Simulator (Watch) (2.2)', Simulator], ['Sublime Text', Sublime], ['TextEdit', TextEdit], ['Xamarin Studio', Xamarin], ['Xcode (7.3.1)', Xcode],
];

const contextGroups = [
  ['Open', 'Open With'], ['Move to Trash'],
  ['Get Info', 'Rename', 'Compress “index.html”', 'Duplicate', 'Make Alias', 'Quick Look “index.html”', 'Share'],
  ['Copy “index.html”'], ['Clean Up Selection', 'Show View Options'], ['Tags...'], ['Open URL in BibDesk Web Group', 'Reveal in Finder'],
];

const tags = [
  ['#fe5f5d', '#f04642'], ['#f7a24e', '#ee8d2b'], ['#f3cc54', '#e6b935'], ['#6ecb5a', '#50b63a'], ['#50b8f2', '#2a9fe2'], ['#cf89df', '#bb68d0'], ['#a2a2a6', '#88888b'],
];

const dockApps = [
  [Finder, 1], [Launchpad], [Safari], [Mail], [Calendar], [Messages], [Stickies], [Maps], [Dashboard], [Mission], [Word], [Spotify, 2], [PinkBars], [Slack], [Shazam], [Gate],
  [Xcode], [Pages], [Octocat], [Cube], [IntelliJ], [PhpStorm], [FileZilla], [Sublime, 1], [Idle], [Xamarin], [Blender], [AndroidStudio], [Rings], [TeX], [Terminal, 1],
  [TextEdit], [SysPrefs], [DropboxApp], [Chrome, 1], [IMovie], [Ps, 1], [Ai], [Pr], [QuickTime], [Acrobat, 1],
];

const StatusIcons = () => (
  <>
    <Glyph $w={34} $gap={26} viewBox="0 0 34 44" fill="#b1b1b1"><path d="M9 7l8 6-9 6-8-6ZM25 7l9 6-8 6-9-6ZM0 24l8-5 9 6-8 6ZM34 24l-8-5-9 6 8 6ZM17 27l9 6v1l-9 5-9-5v-1Z" /></Glyph>
    <Glyph $w={32} $gap={27} viewBox="0 0 32 44"><path d="M11 6h10q2 0 2 2v7h7q2 0 2 2v10q0 2-2 2h-7v7q0 2-2 2H11q-2 0-2-2v-7H2q-2 0-2-2V17q0-2 2-2h7V8q0-2 2-2Z" fill="#444" /><path d="M16 11v10M19 21.500h7" stroke="#fff" strokeWidth="1.700" /><circle cx="16" cy="21.500" r="2" fill="#fff" /></Glyph>
    <Glyph $w={39} $gap={26} viewBox="0 0 39 44">
      <path d="M11.500 33.800A11.300 11.300 0 0 1 10.500 11.500C17 3.500 38.500 4 38.500 20.500C38.500 27 33 33.800 25 33.800Z" fill="#0c0c0c" />
      <g fill="none" stroke="#f8f8f8" strokeWidth="2.200" strokeLinecap="round"><path d="M14.500 28.500C7 31.500 3.500 27 4 22.500C4.500 17 11 14 15.500 18L25.500 28.500C31 30 35 25 34.500 20C34 13.500 26 8.500 19.500 12.500C17.500 13.800 16.500 15 16 16" /><path d="M10.500 22L17.500 29M20.500 17C25 13.500 30.500 17 29.500 22.500" /></g>
    </Glyph>
    <Glyph $w={32} $gap={25} viewBox="0 0 32 44"><rect x="1" y="15" width="30" height="13" rx="3" fill="#777" filter="url(#soft)" /><rect x="4" y="16" width="24" height="11" rx="1.500" fill="#000" /></Glyph>
    <Glyph $w={36} $gap={32} viewBox="0 0 36 44" fill="none" stroke="#c2c2c2" strokeWidth="2"><path d="M6 15A15.300 15.300 0 1 1 9 31.500M20 12v10l4 4" /><path d="M0 18h11L5.500 26Z" fill="#c2c2c2" stroke="none" /></Glyph>
    <Glyph $w={20} $gap={29} viewBox="0 0 20 44"><path d="M1 14.500 18.500 29.500 10.500 36.500V9L18.500 15.500 1 30.500" fill="none" stroke="#c8c8c8" strokeWidth="1.900" /></Glyph>
    <Glyph $w={41} $gap={21} viewBox="0 0 41 44" fill="none" stroke="#424242" strokeWidth="3"><path d="M1.500 16.500C12 6 29 6 39.500 16.500M7 22.500C14.500 15 26.500 15 34 22.500M12.500 28C17 23.500 24 23.500 28.500 28" /><path d="M20.500 36l-4-3.800c2-2 6-2 8 0Z" fill="#424242" stroke="none" /></Glyph>
    <Glyph $w={16} $gap={45} viewBox="0 0 16 44"><path d="M0 18q0-1 1-1h5l10-7.500V34L6 28H1q-1 0-1-1Z" fill="#424242" /></Glyph>
  </>
);

export default function App() {
  return (
    <Screen>
      <GlobalStyle />
      <Defs />
      <MenuBar>
        <AppleMark><FaApple size={35} color="#424242" /></AppleMark>
        {barItems.map(([t, w, ls, bold]) => <BarItem key={t} $w={w} $ls={ls} $bold={bold}>{t}</BarItem>)}
        <Status>
          <StatusIcons />
          <Percent>100%</Percent>
          <Glyph $w={47} $gap={30} viewBox="0 0 47 44"><rect x="1" y="11" width="40" height="22" rx="4" fill="none" stroke="#424242" strokeWidth="2" /><rect x="4.500" y="14" width="33" height="16" rx="1" fill="#424242" /><path d="M43 17.500q4 .5 4 4.500t-4 4.500Z" fill="#424242" /></Glyph>
          <Clock>Mon 8:18 PM</Clock>
          <Glyph $w={29} $gap={30} viewBox="0 0 29 44"><circle cx="11.500" cy="19.500" r="10" fill="none" stroke="#424242" strokeWidth="2.300" /><path d="M18.500 27 27.500 35.500" stroke="#424242" strokeWidth="3" /></Glyph>
          <Glyph $w={37} $gap={46} viewBox="0 0 37 44"><path d="M0 14h5M8.500 14H37M0 22h5M8.500 22H31M0 30h5M8.500 30H37" stroke="#c2c2c2" strokeWidth="3.800" /></Glyph>
        </Status>
      </MenuBar>

      <Desktop>
        <Wordmark viewBox="600 660 920 260">
          <Thin x="614" y="883" $c="#48f23a" $size={229} $sw={1}>&lt;</Thin>
          <Thin x="763 806" y="868" $c="#48f23a" $size={84} $w={400}>..</Thin>
          <g transform="scale(.67 1)">
            <Thin x="1259" y="872" $c="#48f23a" $size={238} $sw={1}>/</Thin>
            <Thin x="1356 1499" y="868" $c="#f81b66" $size={219}>bl</Thin>
            <Thin x="1559 1697" y="868" $c="#f81b66" $size={208}>on</Thin>
            <Thin x="1839" y="868" $c="#f81b66" $size={219}>d</Thin>
            <Thin x="1984 2049" y="868" $c="#f81b66" $size={208}>ie</Thin>
            <Thin x="2178.5" y="868" $c="#8a3fe0" $size={219}>b</Thin>
          </g>
        </Wordmark>
        <Column>
          <FolderArt viewBox="0 0 128 102">
            <path d="M1 95V5Q2 .5 7 .5H37Q41 .5 43 4L48 9.500H121Q127 10 127 16V95Z" fill="#a3e1fd" />
            <path d="M1 20Q1 16 5 16H123Q127 16 127 20V95Q127 99 123 99H5Q1 99 1 95Z" fill="url(#gFolder)" />
            <path d="M1 87.500H127V95Q127 99 123 99H5Q1 99 1 95Z" fill="#74c4e6" />
            <path d="M1 88H127M1 92H127" stroke="#9fdcf5" strokeWidth="1.200" /><path d="M3 100H125" stroke="#8aa5b2" strokeWidth="1.500" opacity=".6" />
          </FolderArt>
          <FolderLabel>folder</FolderLabel>
          <FileTile>
            <FileArt viewBox="0 0 94 126">
              <path d="M1 2H42C56 2 60 12 70 22L82 33C90 40 94 48 94 60V127H1Z" fill="#777" filter="url(#soft)" opacity=".6" />
              <path d="M0 0H42C54 0 58 9 68 19L80 31C89 38 93.500 46 93.500 58V126H0Z" fill="#fcfcfc" />
              <path d="M59 9C61 14 61 22 59 29 67 27 76 29 82 32Z" fill="url(#gCurl)" stroke="#d2d2d2" strokeWidth=".7" />
              <T x="46" y="118.500" $s={18} $c="#7c7c7c" $ls={0.5}>HTML</T>
            </FileArt>
          </FileTile>
          <FileLabel>index.html</FileLabel>
        </Column>
      </Desktop>

      <Dock>
        {dockApps.map(([A, state], i) => (
          <Slot key={i}>
            <AppIcon art={A} />
            {state && <Dot $soft={state === 2} />}
          </Slot>
        ))}
        <DockRule />
        <Slot><AppIcon art={FinderWindow} /></Slot>
        <Slot><AppIcon art={DarkWindow} /></Slot>
        <Slot><AppIcon art={PageWindow} lines /></Slot>
        <Slot><AppIcon art={PageWindow} /></Slot>
        <Slot><AppIcon art={Trash} /></Slot>
      </Dock>

      <Menu $x={1928} $y={578} $w={510} $tint>
        {contextGroups.map((group, gi) => (
          <React.Fragment key={gi}>
            {gi > 0 && <Divider />}
            {group.map(t => (
              <Item key={t} $pad={42} $active={t === 'Open With'} $shade>
                <ItemText $lift={3} $quoted={t.includes('“')}>{t}</ItemText>
                {(t === 'Open With' || t === 'Share') && <Arrow viewBox="0 0 18 20"><path d="M0 0 18 10 0 20Z" fill="currentColor" /></Arrow>}
              </Item>
            ))}
            {group[0] === 'Tags...' && <Tags>{tags.map(([c, b]) => <Tag key={c} $c={c} $b={b} />)}</Tags>}
          </React.Fragment>
        ))}
      </Menu>

      <Menu $x={1488} $y={616} $w={440}>
        <Item $tall $pad={42} $active>
          <ItemIcon><AppIcon art={Chrome} size={33} /></ItemIcon>
          <ItemText>Google Chrome (default)</ItemText>
        </Item>
        <Divider />
        {openWith.map(([t, A]) => (
          <Item $tall $pad={42} key={t}>
            <ItemIcon><AppIcon art={A} size={36} /></ItemIcon>
            <ItemText>{t}</ItemText>
          </Item>
        ))}
        <Divider />
        <Item $pad={42}><ItemText $lift={3}>App Store...</ItemText></Item>
        <Item $pad={42}><ItemText $lift={3}>Other...</ItemText></Item>
      </Menu>
    </Screen>
  );
}
